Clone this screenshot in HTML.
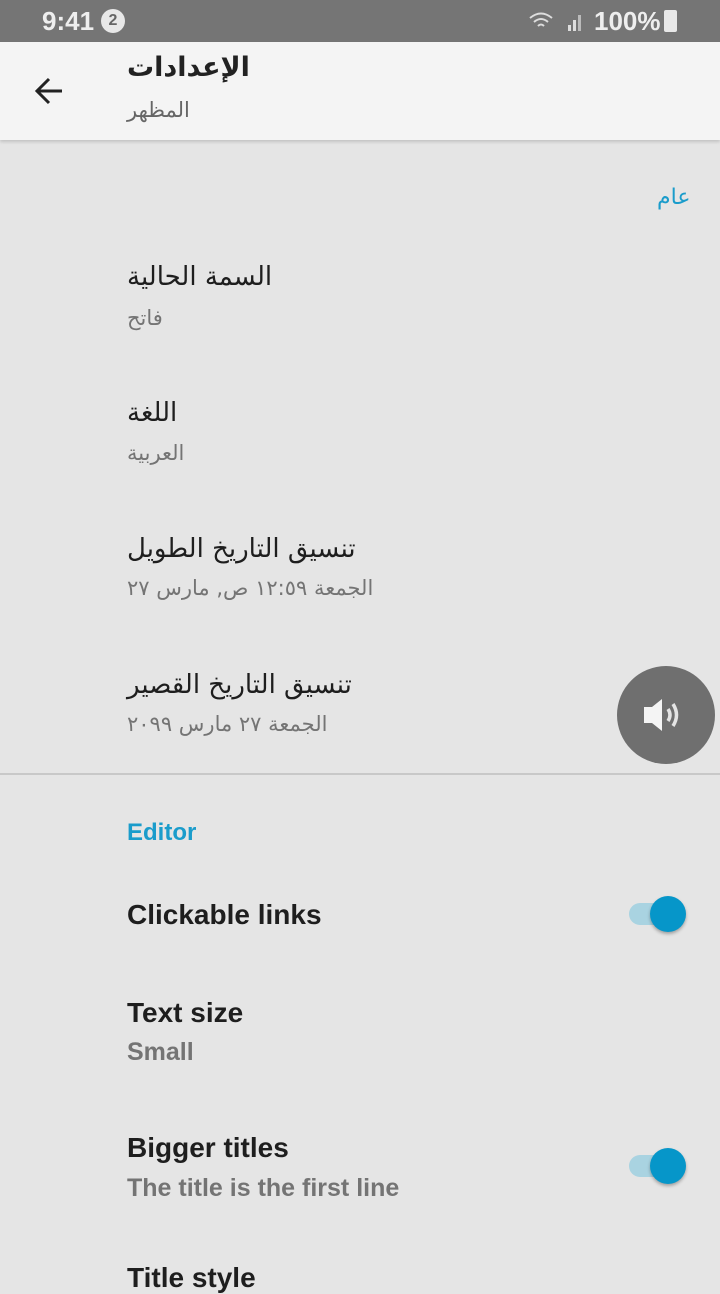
<!DOCTYPE html>
<html><head><meta charset="utf-8"><style>
body{margin:0;width:720px;height:1280px;overflow:hidden;background:#e5e5e5;font-family:"Liberation Sans","Noto Sans CJK SC","DejaVu Sans",sans-serif;position:relative}
.a{position:absolute;white-space:nowrap}
.ar{font-family:"DejaVu Sans","Noto Sans CJK SC",sans-serif;direction:rtl;unicode-bidi:embed}
.t{font-size:26px;color:#1e1e1e}
.s{font-size:21px;color:#747474}
.en{font-weight:bold}
.sw{position:absolute;width:40px;height:22px;border-radius:11px;background:#a9d3e1}
.kn{position:absolute;width:36px;height:36px;border-radius:50%;background:#0696c9;box-shadow:0 2px 3px rgba(0,0,0,.3)}
</style></head><body>
<div class="a" style="left:0;top:0;width:720px;height:42px;background:#757575"></div>
<div class="a" style="left:42px;top:6px;font-size:26px;font-weight:bold;color:#eee">9:41</div>
<div class="a" style="left:101px;top:9px;width:24px;height:24px;border-radius:50%;background:#e8e8e8;color:#666;font-size:16px;font-weight:bold;text-align:center;line-height:24px">2</div>
<svg class="a" style="left:528px;top:9px" width="60" height="24"><path d="M2 9 Q13 0 24 9 M6 13 Q13 7 20 13 M10 17 Q13 14 16 17" stroke="#ddd" stroke-width="2" fill="none"/><rect x="40" y="16" width="3" height="6" fill="#ddd"/><rect x="45" y="11" width="3" height="11" fill="#ddd"/><rect x="50" y="6" width="3" height="16" fill="#bbb"/></svg>
<div class="a" style="left:594px;top:6px;font-size:26px;font-weight:bold;color:#eee">100%</div>
<div class="a" style="left:664px;top:10px;width:13px;height:22px;background:#e8e8e8;border-radius:2px"></div>
<div class="a" style="left:0;top:42px;width:720px;height:98px;background:#f4f4f4;box-shadow:0 2px 3px rgba(0,0,0,.15)"></div>
<svg class="a" style="left:34px;top:76px" width="30" height="30"><path d="M28 15H4M15 3 3 15 15 27" stroke="#222" stroke-width="3" fill="none"/></svg>
<div class="a ar" style="left:127px;top:52px;font-size:27px;font-weight:bold;color:#222">الإعدادات</div>
<div class="a ar" style="left:127px;top:98px;font-size:21px;color:#666">المظهر</div>
<div class="a ar" style="left:657px;top:185px;font-size:22px;color:#1a9ccb">عام</div>
<div class="a ar t" style="left:127px;top:262px">السمة الحالية</div>
<div class="a ar s" style="left:127px;top:306px">فاتح</div>
<div class="a ar t" style="left:127px;top:398px">اللغة</div>
<div class="a ar s" style="left:127px;top:441px">العربية</div>
<div class="a ar t" style="left:127px;top:534px">تنسيق التاريخ الطويل</div>
<div class="a ar s" style="left:127px;top:576px">الجمعة ١٢:٥٩ ص, مارس ٢٧</div>
<div class="a ar t" style="left:127px;top:670px">تنسيق التاريخ القصير</div>
<div class="a ar s" style="left:127px;top:712px">الجمعة ٢٧ مارس ٢٠٩٩</div>
<div class="a" style="left:617px;top:666px;width:98px;height:98px;border-radius:50%;background:#6f6f6f"></div>
<svg class="a" style="left:640px;top:695px" width="52" height="40"><path d="M4 12H12L22 4V36L12 28H4Z" fill="#f4f4f4"/><path d="M28 14Q32 20 28 26M33 9Q40 20 33 31" stroke="#e4e4e4" stroke-width="3.5" fill="none"/></svg>
<div class="a" style="left:0;top:773px;width:720px;height:2px;background:#c8c8c8"></div>
<div class="a en" style="left:127px;top:819px;font-size:24px;color:#1a9ccb">Editor</div>
<div class="a t en" style="left:127px;top:899px;font-size:28px">Clickable links</div>
<div class="sw" style="left:629px;top:903px"></div><div class="kn" style="left:650px;top:896px"></div>
<div class="a t en" style="left:127px;top:997px;font-size:28px">Text size</div>
<div class="a s en" style="left:127px;top:1038px;font-size:25px">Small</div>
<div class="a t en" style="left:127px;top:1132px;font-size:28px">Bigger titles</div>
<div class="a s en" style="left:127px;top:1174px;font-size:25px">The title is the first line</div>
<div class="sw" style="left:629px;top:1155px"></div><div class="kn" style="left:650px;top:1148px"></div>
<div class="a t en" style="left:127px;top:1262px;font-size:28px">Title style</div>
</body></html>
